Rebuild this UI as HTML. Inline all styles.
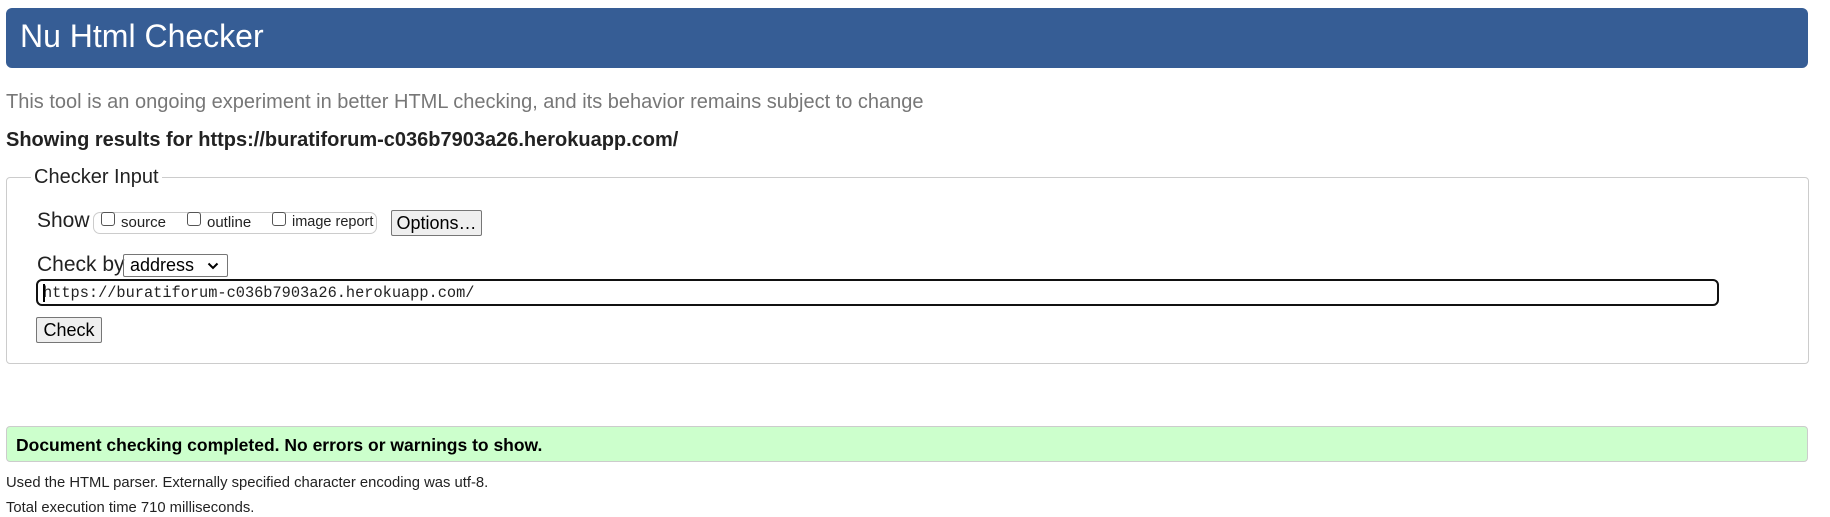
<!DOCTYPE html>
<html><head><meta charset="utf-8"><style>
body{margin:0;width:1830px;height:516px;background:#fff;font-family:"Liberation Sans",Arial,sans-serif;position:relative;overflow:hidden;color:#000}
.a{position:absolute;white-space:nowrap}
.bar{left:6px;top:8px;width:1802px;height:60px;background:#365d95;border-radius:6px}
.btn{background:#efefef;border:1px solid #767676;border-radius:2px;box-sizing:border-box;font-size:18px;text-align:center}
.cb{width:12px;height:12px;border:1px solid #555;border-radius:3px;background:#fff}
.lbl{font-size:15px;color:#222}
</style></head><body>
<div class="a bar"></div>
<div class="a" style="left:20px;top:16px;font-size:32px;color:#fff;line-height:40px">Nu Html Checker</div>
<div class="a" style="left:6px;top:90px;font-size:20px;color:#777;line-height:24px">This tool is an ongoing experiment in better HTML checking, and its behavior remains subject to change</div>
<div class="a" style="left:6px;top:129px;font-size:20px;font-weight:bold;color:#222;line-height:22px">Showing results for https://buratiforum-c036b7903a26.herokuapp.com/</div>
<div class="a" style="left:6px;top:177px;width:1801px;height:185px;border:1px solid #ccc;border-radius:4px"></div>
<div class="a" style="left:31px;top:165px;font-size:20px;background:#fff;padding:0 3px;line-height:24px;color:#222">Checker Input</div>
<div class="a" style="left:37px;top:209px;font-size:21px;line-height:24px;color:#222">Show</div>
<div class="a" style="left:93px;top:212px;width:284px;height:22px;border:1px solid #ccc;border-radius:7px;box-sizing:border-box"></div>
<div class="a cb" style="left:101px;top:212px"></div><div class="a lbl" style="left:121px;top:214px">source</div>
<div class="a cb" style="left:187px;top:212px"></div><div class="a lbl" style="left:207px;top:214px">outline</div>
<div class="a cb" style="left:272px;top:212px"></div><div class="a lbl" style="left:292px;top:214px;font-size:14.5px">image report</div>
<div class="a btn" style="left:391px;top:210px;width:91px;height:26px;line-height:24px">Options…</div>
<div class="a" style="left:37px;top:253px;font-size:21px;line-height:24px;color:#222">Check by</div>
<div class="a" style="left:123px;top:254px;width:105px;height:23px;border:1px solid #767676;box-sizing:border-box;font-size:18px;line-height:21px;padding-left:6px;border-radius:2px">address<svg style="position:absolute;right:8px;top:7px" width="12" height="8" viewBox="0 0 12 8"><path d="M1.5 1.5 L6 6 L10.5 1.5" fill="none" stroke="#000" stroke-width="2"/></svg></div>
<div class="a" style="left:36px;top:279px;width:1683px;height:27px;border:2.5px solid #111;border-radius:6px;box-sizing:border-box"></div>
<div class="a" style="left:43px;top:284px;font-family:'Liberation Mono',monospace;font-size:15.3px;line-height:19px;color:#222">https://buratiforum-c036b7903a26.herokuapp.com/</div>
<div class="a" style="left:43px;top:284px;width:2px;height:18px;background:#000"></div>
<div class="a btn" style="left:36px;top:317px;width:66px;height:26px;line-height:24px">Check</div>
<div class="a" style="left:6px;top:426px;width:1802px;height:36px;background:#ccffcc;border:1px solid #ccc;border-radius:4px;box-sizing:border-box"></div>
<div class="a" style="left:16px;top:434px;font-size:17.5px;font-weight:bold;line-height:22px">Document checking completed. No errors or warnings to show.</div>
<div class="a" style="left:6px;top:474px;font-size:14.8px;line-height:18px;color:#222">Used the HTML parser. Externally specified character encoding was utf-8.</div>
<div class="a" style="left:6px;top:499px;font-size:14.8px;line-height:18px;color:#222">Total execution time 710 milliseconds.</div>
</body></html>
